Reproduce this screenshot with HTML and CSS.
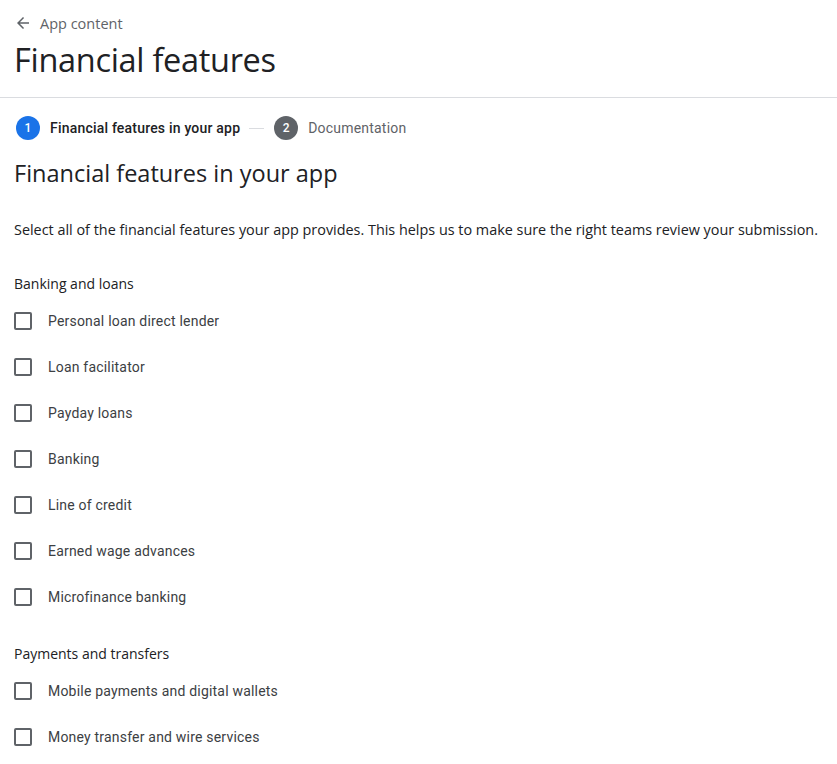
FILE: index.html
```html
<!DOCTYPE html>
<html lang="en">
<head>
    <meta charset="UTF-8">
    <meta name="viewport" content="width=device-width, initial-scale=1.0">
    <title>Financial features</title>
    <link rel="stylesheet" href="styles.css">
</head>
<body>
    <header class="page-header">
        <a class="back-link" href="#">
            <svg class="back-icon" viewBox="0 0 24 24" width="18" height="18"><path d="M20 11H7.83l5.59-5.59L12 4l-8 8 8 8 1.41-1.41L7.83 13H20v-2z"/></svg>
            <span>App content</span>
        </a>
        <h1>Financial features</h1>
    </header>
    <div class="stepper">
        <div class="step active">
            <span class="step-num">1</span>
            <span class="step-label">Financial features in your app</span>
        </div>
        <span class="step-line"></span>
        <div class="step">
            <span class="step-num">2</span>
            <span class="step-label">Documentation</span>
        </div>
    </div>
    <main>
        <h2>Financial features in your app</h2>
        <p class="intro">Select all of the financial features your app provides. This helps us to make sure the right teams review your submission.</p>

        <section class="group">
            <h3>Banking and loans</h3>
            <label class="check"><input type="checkbox"><span class="box"></span>Personal loan direct lender</label>
            <label class="check"><input type="checkbox"><span class="box"></span>Loan facilitator</label>
            <label class="check"><input type="checkbox"><span class="box"></span>Payday loans</label>
            <label class="check"><input type="checkbox"><span class="box"></span>Banking</label>
            <label class="check"><input type="checkbox"><span class="box"></span>Line of credit</label>
            <label class="check"><input type="checkbox"><span class="box"></span>Earned wage advances</label>
            <label class="check"><input type="checkbox"><span class="box"></span>Microfinance banking</label>
        </section>

        <section class="group">
            <h3>Payments and transfers</h3>
            <label class="check"><input type="checkbox"><span class="box"></span>Mobile payments and digital wallets</label>
            <label class="check"><input type="checkbox"><span class="box"></span>Money transfer and wire services</label>
        </section>
    </main>
</body>
</html>
```

FILE: styles.css
```css
body {
    margin: 0;
    padding: 0;
    background-color: #fff;
    color: #202124;
    font-family: Roboto, Arial, sans-serif;
    font-size: 14px;
}
.page-header {
    padding: 12px 0 0 14px;
    border-bottom: 1px solid #dadce0;
}
.back-link {
    display: flex;
    align-items: center;
    gap: 8px;
    color: #5f6368;
    text-decoration: none;
    font-family: "Open Sans", sans-serif;
    font-size: 14.5px;
    height: 22px;
}
.back-icon {
    fill: #5f6368;
}
h1 {
    margin: 0;
    padding: 8px 0 19px;
    font-family: "Open Sans", sans-serif;
    font-weight: 400;
    font-size: 32.5px;
    line-height: 36px;
    letter-spacing: -0.3px;
}
.stepper {
    display: flex;
    align-items: center;
    padding: 18px 0 0 16px;
    height: 24px;
}
.step {
    display: flex;
    align-items: center;
    gap: 10px;
}
.step-num {
    width: 24px;
    height: 24px;
    border-radius: 50%;
    background-color: #5f6368;
    color: #fff;
    font-size: 12px;
    font-weight: 500;
    display: flex;
    align-items: center;
    justify-content: center;
}
.step.active .step-num {
    background-color: #1a73e8;
}
.step-label {
    color: #5f6368;
    letter-spacing: 0.2px;
}
.step.active .step-label {
    color: #202124;
    font-weight: 500;
}
.step-line {
    width: 15px;
    height: 1px;
    background-color: #dadce0;
    margin: 0 10px 0 9px;
}
main {
    padding: 0 14px;
}
h2 {
    margin: 19px 0 0;
    font-family: "Open Sans", sans-serif;
    font-weight: 400;
    font-size: 23.5px;
    line-height: 28px;
}
.intro {
    margin: 33px 0 34px;
    font-family: "Open Sans", sans-serif;
    font-size: 14.4px;
    line-height: 20px;
}
.group {
    margin-top: 24px;
}
h3 {
    margin: 0 0 4px;
    font-family: "Open Sans", sans-serif;
    font-weight: 500;
    font-size: 14px;
    line-height: 20px;
}
.check {
    display: flex;
    align-items: center;
    height: 46px;
    color: #3c4043;
    letter-spacing: 0.2px;
}
.check input {
    display: none;
}
.box {
    width: 14px;
    height: 14px;
    border: 2px solid #5f6368;
    border-radius: 2px;
    margin-right: 16px;
}
```
